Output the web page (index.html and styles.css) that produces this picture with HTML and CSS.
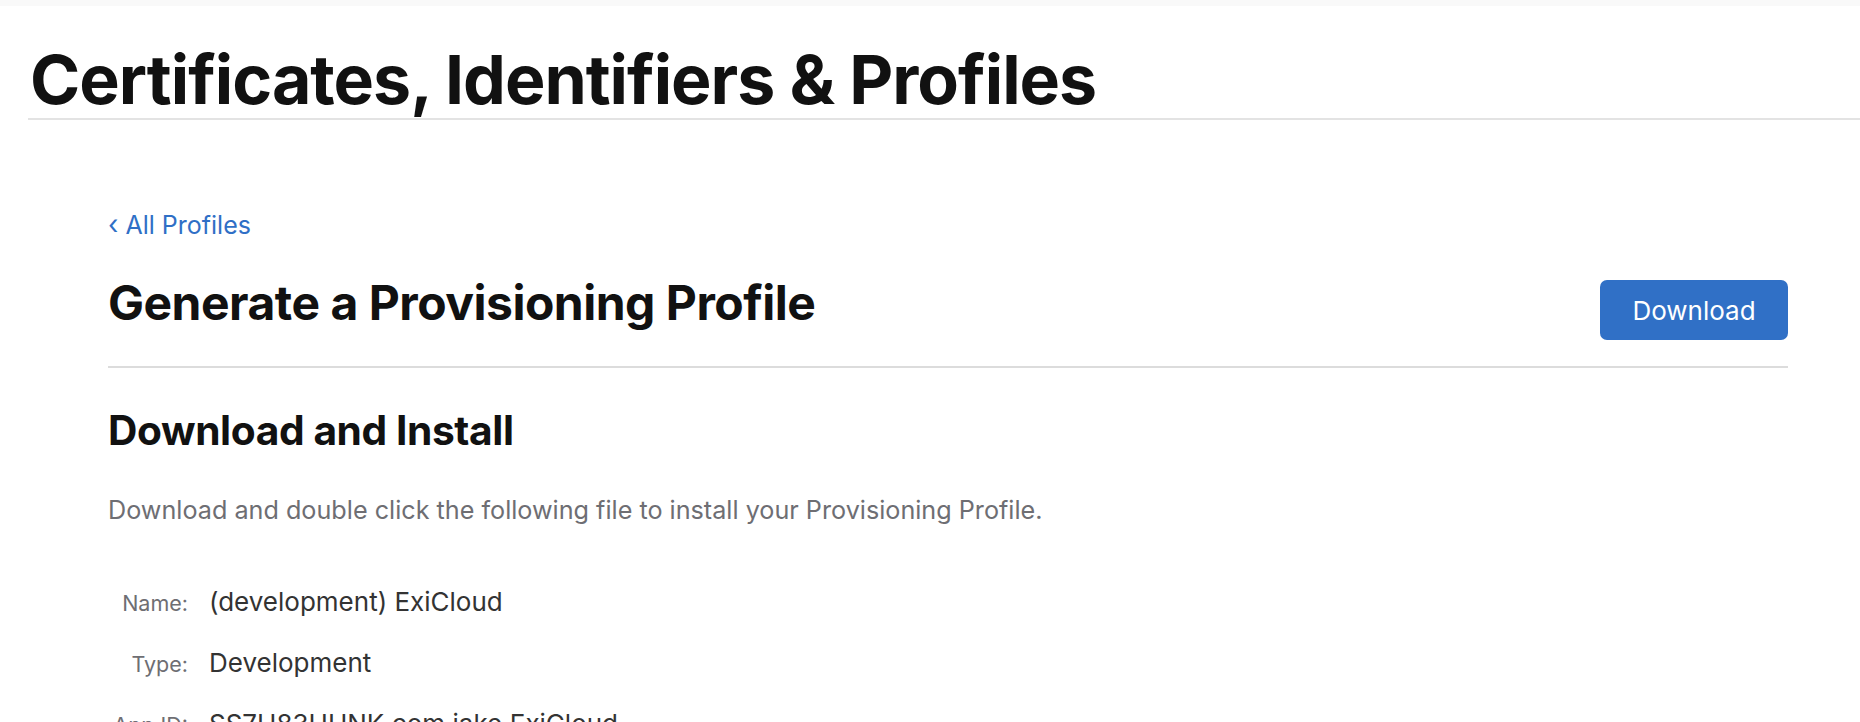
FILE: index.html
```html
<!DOCTYPE html>
<html lang="en">
<head>
<meta charset="utf-8">
<title>Certificates, Identifiers &amp; Profiles</title>
<link rel="stylesheet" href="styles.css">
</head>
<body>
<div class="topbar"></div>
<header class="page-header">
  <h1 class="page-title">Certificates, Identifiers &amp; Profiles</h1>
</header>
<main class="content">
  <a class="back-link" href="#"><span class="chev">‹</span> All Profiles</a>
  <div class="title-row">
    <h2 class="section-title">Generate a Provisioning Profile</h2>
    <button class="btn-primary" type="button">Download</button>
  </div>
  <h3 class="sub-title">Download and Install</h3>
  <p class="desc">Download and double click the following file to install your Provisioning Profile.</p>
  <dl class="details">
    <div class="detail-row"><dt>Name:</dt><dd>(development) ExiCloud</dd></div>
    <div class="detail-row"><dt>Type:</dt><dd>Development</dd></div>
    <div class="detail-row"><dt>App ID:</dt><dd>SS7U83UUNK.com.iake.ExiCloud</dd></div>
  </dl>
</main>
</body>
</html>
```
FILE: styles.css
```css
* { box-sizing: border-box; }
html, body { margin: 0; padding: 0; }
body {
  background: #ffffff;
  font-family: Inter, "Noto Sans", "Liberation Sans", sans-serif;
  color: #1d1d1f;
  height: 722px;
  overflow: hidden;
}
.topbar {
  height: 6px;
  background: #f9f9f9;
}
.page-header {
  margin-left: 28px;
  border-bottom: 2px solid #e3e3e3;
}
.page-title {
  margin: 0;
  padding: 34px 0 0 2px;
  height: 112px;
  font-size: 68px;
  font-weight: 700;
  line-height: 78px;
  letter-spacing: -1px;
  color: #111111;
  white-space: nowrap;
}
.content {
  padding: 0 72px 0 108px;
}
.back-link {
  display: inline-block;
  margin-top: 90px;
  font-size: 25px;
  line-height: 30px;
  color: #2f6fc6;
  text-decoration: none;
}
.chev { font-size: 27px; }
.title-row {
  display: flex;
  justify-content: space-between;
  align-items: flex-start;
  border-bottom: 2px solid #dcdcdc;
  height: 128px;
}
.section-title {
  margin: 34px 0 0;
  font-size: 48px;
  font-weight: 700;
  line-height: 58px;
  letter-spacing: -0.5px;
  color: #111111;
}
.btn-primary {
  margin-top: 40px;
  width: 188px;
  height: 60px;
  border: none;
  border-radius: 7px;
  background: #3070c6;
  color: #ffffff;
  font-family: inherit;
  font-size: 26px;
}
.sub-title {
  margin: 38px 0 0;
  font-size: 40.7px;
  font-weight: 700;
  line-height: 50px;
  letter-spacing: -0.4px;
  color: #111111;
}
.desc {
  margin: 38px 0 0;
  font-size: 25.2px;
  line-height: 32px;
  color: #6e6e73;
}
.details {
  margin: 45px 0 0;
}
.detail-row {
  display: flex;
  align-items: baseline;
  height: 61px;
}
.detail-row dt {
  width: 80px;
  text-align: right;
  font-size: 21.5px;
  line-height: 61px;
  color: #6e6e73;
}
.detail-row dd {
  margin: 0 0 0 21px;
  font-size: 26px;
  line-height: 61px;
  color: #333333;
}
```
